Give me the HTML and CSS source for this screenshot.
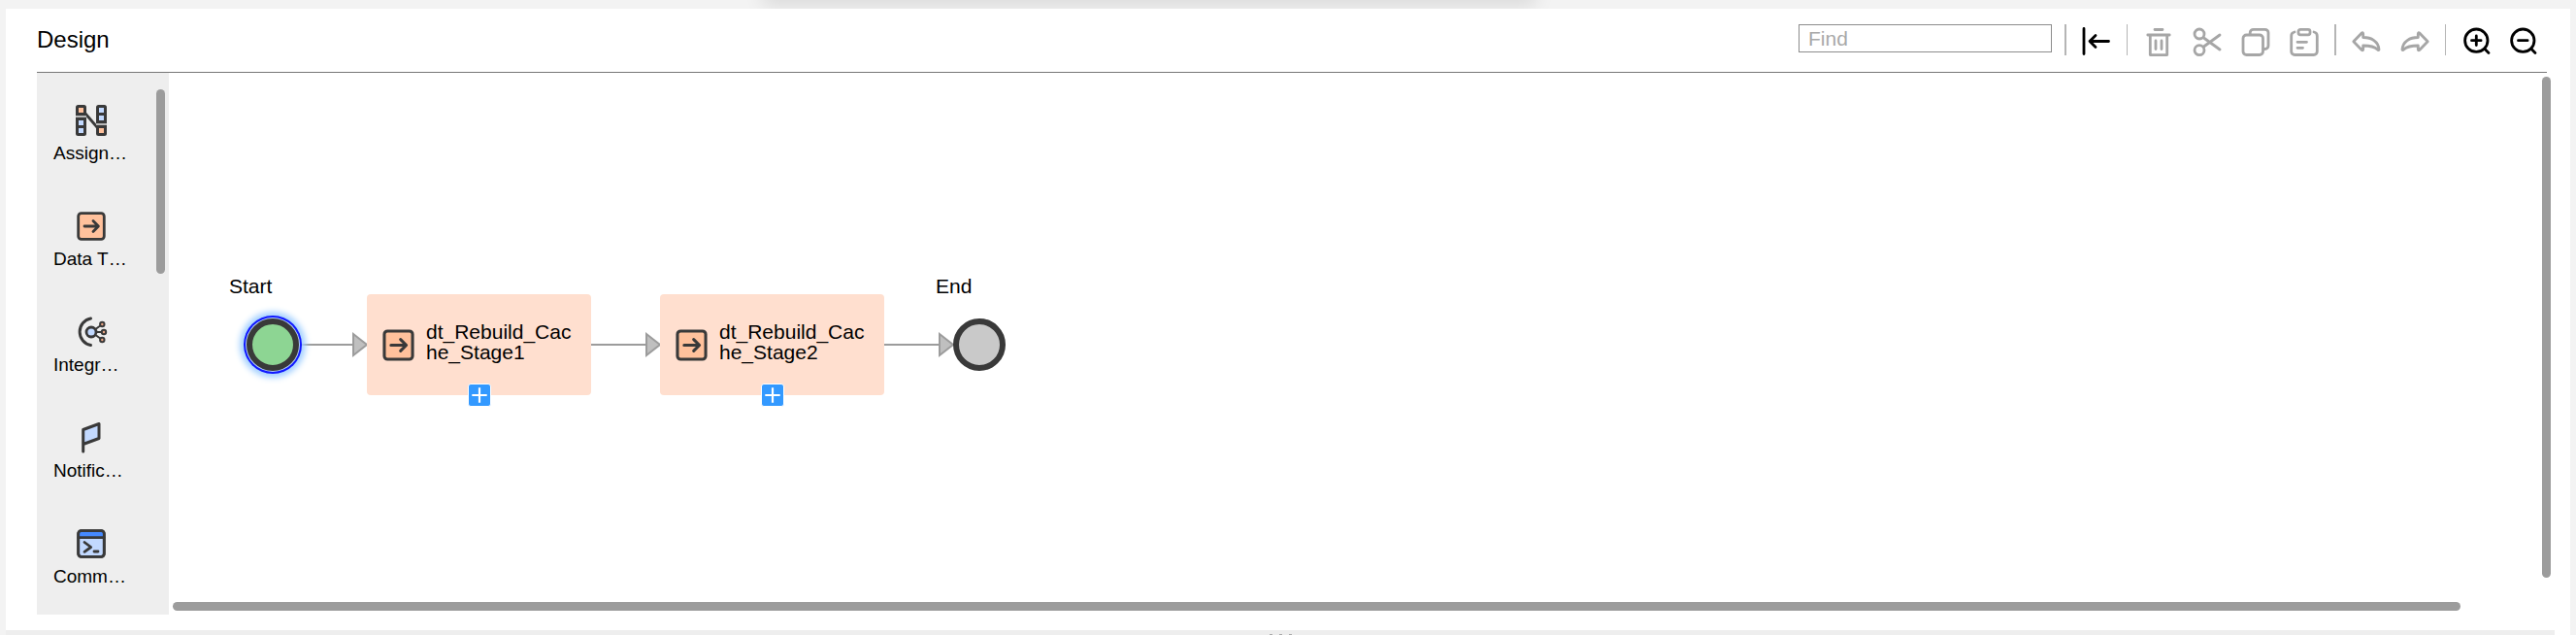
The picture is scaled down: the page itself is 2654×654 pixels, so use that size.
FILE: index.html
```html
<!DOCTYPE html>
<html lang="en">
<head>
<meta charset="utf-8">
<title>Design</title>
<link rel="stylesheet" href="styles.css">
</head>
<body>
<svg class="defs" width="0" height="0" aria-hidden="true">
  <symbol id="data-transform" viewBox="0 0 32 32">
    <rect x="2.7" y="2.7" width="26.6" height="26.6" rx="3" fill="#ffc19c" stroke="#393939" stroke-width="2.8"/>
    <path d="M9 16H23M18 10.6L23.4 16L18 21.4" fill="none" stroke="#393939" stroke-width="2.8" stroke-linecap="round" stroke-linejoin="round"/>
  </symbol>
</svg>
<div class="page-shadow"></div>
<main class="panel">
  <header class="header">
    <h1 class="title">Design</h1>
    <div class="toolbar">
      <input class="find" type="text" placeholder="Find" aria-label="Find">
      <span class="separator"></span>
      <div class="tools">
        <button class="tool" type="button" aria-label="Collapse"><svg viewBox="0 0 32 32"><path d="M3 2.5V28.5M9 15.5H28.5M15 9.5L9 15.5L15 21.5"/></svg></button>
      </div>
      <span class="separator thin"></span>
      <div class="tools wide">
        <button class="tool muted" type="button" aria-label="Delete"><svg viewBox="0 0 32 32"><path d="M12 3.5H20M4.8 9H27.2M7.3 9V29.6H24.7V9M13 15V23.5M19 15V23.5"/></svg></button>
        <button class="tool muted" type="button" aria-label="Cut"><svg viewBox="0 0 32 32"><circle cx="8" cy="8" r="5"/><circle cx="8" cy="24.7" r="5"/><path d="M12.5 12L29 24M12.5 21L29 9"/></svg></button>
        <button class="tool muted" type="button" aria-label="Copy"><svg viewBox="0 0 32 32"><rect x="3" y="9" width="20.5" height="20.5" rx="3.5"/><path d="M10.2 8.5V6.8A3.5 3.5 0 0 1 13.7 3.3H25.5A3.5 3.5 0 0 1 29 6.8V20A3.5 3.5 0 0 1 25.5 23.5H24"/></svg></button>
        <button class="tool muted" type="button" aria-label="Paste"><svg viewBox="0 0 32 32"><path d="M6 6C3.5 6.5 2.7 8 2.7 10V26A3.5 3.5 0 0 0 6.2 29.5H25.8A3.5 3.5 0 0 0 29.3 26V10C29.3 8 28.5 6.5 26 6M9 16.3H18.5M9 22.3H14.5"/><rect x="10" y="3.3" width="12" height="5.5" rx="2"/></svg></button>
      </div>
      <span class="separator"></span>
      <div class="tools wide">
        <button class="tool muted" type="button" aria-label="Undo"><svg viewBox="0 0 32 32"><path d="M2.8 15.7L11 7.2Q12.7 6 12.7 8V11.5C21 11.5 28.5 15.5 29 24Q28.5 25 27.5 24C24 20.5 19 20 12.7 20V23.5Q12.7 25.8 11 24.2Z"/></svg></button>
        <button class="tool muted" type="button" aria-label="Redo"><svg viewBox="0 0 32 32"><path d="M29.2 15.7L21 7.2Q19.3 6 19.3 8V11.5C11 11.5 3.5 15.5 3 24Q3.5 25 4.5 24C8 20.5 13 20 19.3 20V23.5Q19.3 25.8 21 24.2Z"/></svg></button>
      </div>
      <span class="separator thin"></span>
      <div class="tools">
        <button class="tool" type="button" aria-label="Zoom in"><svg viewBox="0 0 32 32"><circle cx="15.3" cy="14.7" r="11.7"/><path d="M23.8 23.2L28 27.4M10.5 14.7H20.1M15.3 9.9V19.5"/></svg></button>
        <button class="tool" type="button" aria-label="Zoom out"><svg viewBox="0 0 32 32"><circle cx="15.3" cy="14.7" r="11.7"/><path d="M23.8 23.2L28 27.4M10.5 14.7H20.1"/></svg></button>
      </div>
    </div>
  </header>

  <div class="editor">
    <aside class="palette">
      <div class="palette-list">
        <button class="item" type="button">
          <svg class="item-icon" viewBox="0 0 32 32"><path d="M10 9L22 23" stroke="#393939" stroke-width="2.8"/><rect width="11" height="32" rx="2.5" fill="#393939"/><rect x="21" width="11" height="32" rx="2.5" fill="#393939"/><path d="M0 11H11V13H0ZM21 19H32V21H21Z" fill="#b8b8b8"/><path d="M3 3H8V8H3ZM24 24H29V29H24Z" fill="#ffc19c"/><path d="M3 16H8V21H3ZM3 24H8V29H3ZM24 3H29V8H24ZM24 11H29V16H24Z" fill="#c2d9ff"/></svg>
          <span class="item-label">Assign…</span>
        </button>
        <button class="item" type="button">
          <svg class="item-icon"><use href="#data-transform"/></svg>
          <span class="item-label">Data T…</span>
        </button>
        <button class="item" type="button">
          <svg class="item-icon" viewBox="0 0 32 32" fill="none" stroke="#393939" stroke-linecap="round"><path d="M15.5 2A14 14 0 0 0 15.5 29.5" stroke-width="3"/><path d="M19 14L26 9M20 16H28M19 18L26 23" stroke-width="2"/><circle cx="16" cy="16" r="5" fill="#c2d9ff" stroke-width="2.8"/><g fill="#e9a583" stroke-width="2"><circle cx="27.3" cy="8" r="2.2"/><circle cx="29" cy="16" r="2.2"/><circle cx="27.3" cy="24" r="2.2"/></g></svg>
          <span class="item-label">Integr…</span>
        </button>
        <button class="item" type="button">
          <svg class="item-icon" viewBox="0 0 32 32"><path d="M7.7 30V7.5L24 1.5V16.5L7.7 22.5" fill="#c2d9ff" stroke="#393939" stroke-width="3" stroke-linecap="round" stroke-linejoin="round"/></svg>
          <span class="item-label">Notific…</span>
        </button>
        <button class="item" type="button">
          <svg class="item-icon" viewBox="0 0 32 32" stroke="#393939" stroke-width="2.8" stroke-linecap="round" stroke-linejoin="round"><rect x="2.7" y="2.7" width="26.6" height="26.6" rx="3" fill="#c2d9ff"/><path d="M4 4H28V9H4Z" fill="#4589ff" stroke="none"/><path d="M3 9.7H29"/><rect x="2.7" y="2.7" width="26.6" height="26.6" rx="3" fill="none"/><path d="M9 14.5L15.7 19.5L9 24.3M19 24H23" fill="none"/></svg>
          <span class="item-label">Comm…</span>
        </button>
      </div>
      <div class="thumb palette-thumb"></div>
    </aside>

    <section class="workspace" aria-label="Flow">
      <div class="canvas">
        <svg class="edges" aria-hidden="true">
          <g stroke="#9c9c9c" stroke-width="2">
            <path d="M133 280H189M435 280H491M737 280H793"/>
            <path d="M190 269L204 280L190 291ZM492 269L506 280L492 291ZM794 269L808 280L794 291Z" fill="#bfbfbf"/>
          </g>
        </svg>
        <span class="caption start-caption">Start</span>
        <div class="terminal start"></div>
        <div class="node stage-one">
          <svg class="node-icon"><use href="#data-transform"/></svg>
          <span class="node-label">dt_Rebuild_Cac<br>he_Stage1</span>
          <button class="add" type="button" aria-label="Add after Stage1"><svg viewBox="0 0 20 20"><path d="M3 10H17M10 3V17"/></svg></button>
        </div>
        <div class="node stage-two">
          <svg class="node-icon"><use href="#data-transform"/></svg>
          <span class="node-label">dt_Rebuild_Cac<br>he_Stage2</span>
          <button class="add" type="button" aria-label="Add after Stage2"><svg viewBox="0 0 20 20"><path d="M3 10H17M10 3V17"/></svg></button>
        </div>
        <span class="caption end-caption">End</span>
        <div class="terminal end"></div>
      </div>
      <div class="thumb vertical-thumb"></div>
      <div class="thumb horizontal-thumb"></div>
    </section>
  </div>

  <div class="splitter"><i></i><i></i><i></i></div>
</main>
</body>
</html>
```
FILE: styles.css
```css
* {
  box-sizing: border-box;
}

body {
  margin: 0;
  padding: 9px 6px 0;
  background: #f3f3f3;
  color: #000;
  font-family: "Liberation Sans", Arial, sans-serif;
}

button {
  padding: 0;
  border: 0;
  background: none;
  color: inherit;
  font: inherit;
}

svg {
  display: block;
}

.defs {
  position: absolute;
}

.page-shadow {
  position: absolute;
  top: -20px;
  left: 29.6%;
  width: 30%;
  height: 20px;
  box-shadow: 0 4px 20px rgba(0, 0, 0, 0.12);
}

.panel {
  position: relative;
  background: #fff;
}

.header {
  display: flex;
  justify-content: space-between;
  align-items: flex-start;
  margin: 0 24px 0 32px;
  padding: 16px 0;
  border-bottom: 1px solid #777;
}

.title {
  margin: 0;
  font-size: 24px;
  font-weight: 400;
  line-height: 32px;
}

.toolbar {
  display: flex;
  align-items: flex-start;
  height: 33px;
  padding-right: 8px;
}

.find {
  width: 261px;
  height: 29px;
  margin-right: -2px;
  padding: 1px 9px 0;
  border: 1px solid #8c8c8c;
  border-radius: 0;
  background: #fff;
  font: 21px "Liberation Sans", Arial, sans-serif;
}

.find::placeholder {
  color: #a9a9a9;
  opacity: 1;
}

.separator {
  width: 2px;
  height: 32px;
  margin: 0 15px;
  background: #b5b5b5;
}

.thin {
  width: 1px;
  margin-right: 16px;
}

.tools {
  display: flex;
  gap: 16px;
  padding-top: 2px;
}

.wide {
  gap: 18px;
}

.tool {
  width: 32px;
  height: 32px;
  color: #000;
}

.tool svg {
  width: 32px;
  height: 32px;
  fill: none;
  stroke: currentColor;
  stroke-width: 2.8;
  stroke-linecap: round;
  stroke-linejoin: round;
}

.tool.muted {
  color: #a6a6a6;
}

.editor {
  display: grid;
  grid-template-columns: 136px 1fr;
  margin: 0 20px 16px 32px;
}

.palette {
  display: flex;
  justify-content: space-between;
  padding-right: 4px;
  background: #eee;
}

.palette-list {
  padding: 13px 0 0 17px;
}

.item {
  display: flex;
  flex-direction: column;
  align-items: center;
  gap: 7px;
  width: 78px;
  height: 109px;
  padding-top: 20px;
}

.item-icon {
  width: 32px;
  height: 32px;
  overflow: visible;
}

.item-label {
  align-self: flex-start;
  font-size: 19px;
  line-height: 22px;
}

.thumb {
  border-radius: 5px;
  background: #9c9c9c;
}

.palette-thumb {
  width: 9px;
  height: 190px;
  margin-top: 17px;
}

.workspace {
  display: grid;
  grid-template-columns: 1fr 9px;
  grid-template-rows: 1fr 9px;
  padding-bottom: 4px;
}

.vertical-thumb {
  margin: 4px 0 25px;
}

.horizontal-thumb {
  margin: 0 84px 0 4px;
}

.canvas {
  position: relative;
  overflow: hidden;
}

.edges {
  position: absolute;
  width: 100%;
  height: 100%;
  fill: none;
}

.caption {
  position: absolute;
  top: 208px;
  font-size: 21px;
  line-height: 24px;
}

.start-caption {
  left: 62px;
}

.end-caption {
  left: 790px;
}

.terminal {
  position: absolute;
  top: 253px;
  width: 54px;
  height: 54px;
  border: 6px solid #393939;
  border-radius: 50%;
}

.start {
  left: 80px;
  background: #8dd593;
  box-shadow: 0 0 0 1px #b7d3f5, 0 0 0 3px #1018ff, 0 0 6px 7px #a3d0ff;
}

.end {
  left: 808px;
  background: #c9c9c9;
}

.node {
  position: absolute;
  top: 228px;
  display: flex;
  align-items: center;
  gap: 11px;
  width: 231px;
  height: 104px;
  padding-left: 15px;
  border-radius: 4px;
  background: #ffdfcf;
}

.stage-one {
  left: 204px;
}

.stage-two {
  left: 506px;
}

.node-icon {
  width: 35px;
  height: 35px;
}

.node-label {
  padding-bottom: 7px;
  font-size: 21px;
  line-height: 21px;
}

.add {
  position: absolute;
  bottom: -12px;
  left: 104px;
  width: 24px;
  height: 24px;
  border: 1px solid #fff;
  border-radius: 3px;
  background: #39f;
}

.add svg {
  width: 22px;
  height: 22px;
  stroke: #fff;
  stroke-width: 2;
}

.splitter {
  display: flex;
  justify-content: center;
  gap: 7px;
  height: 5px;
  margin-right: 16px;
  padding-top: 4px;
  background: #eee;
}

.splitter i {
  width: 3px;
  height: 1px;
  background: #aaa;
}
```
